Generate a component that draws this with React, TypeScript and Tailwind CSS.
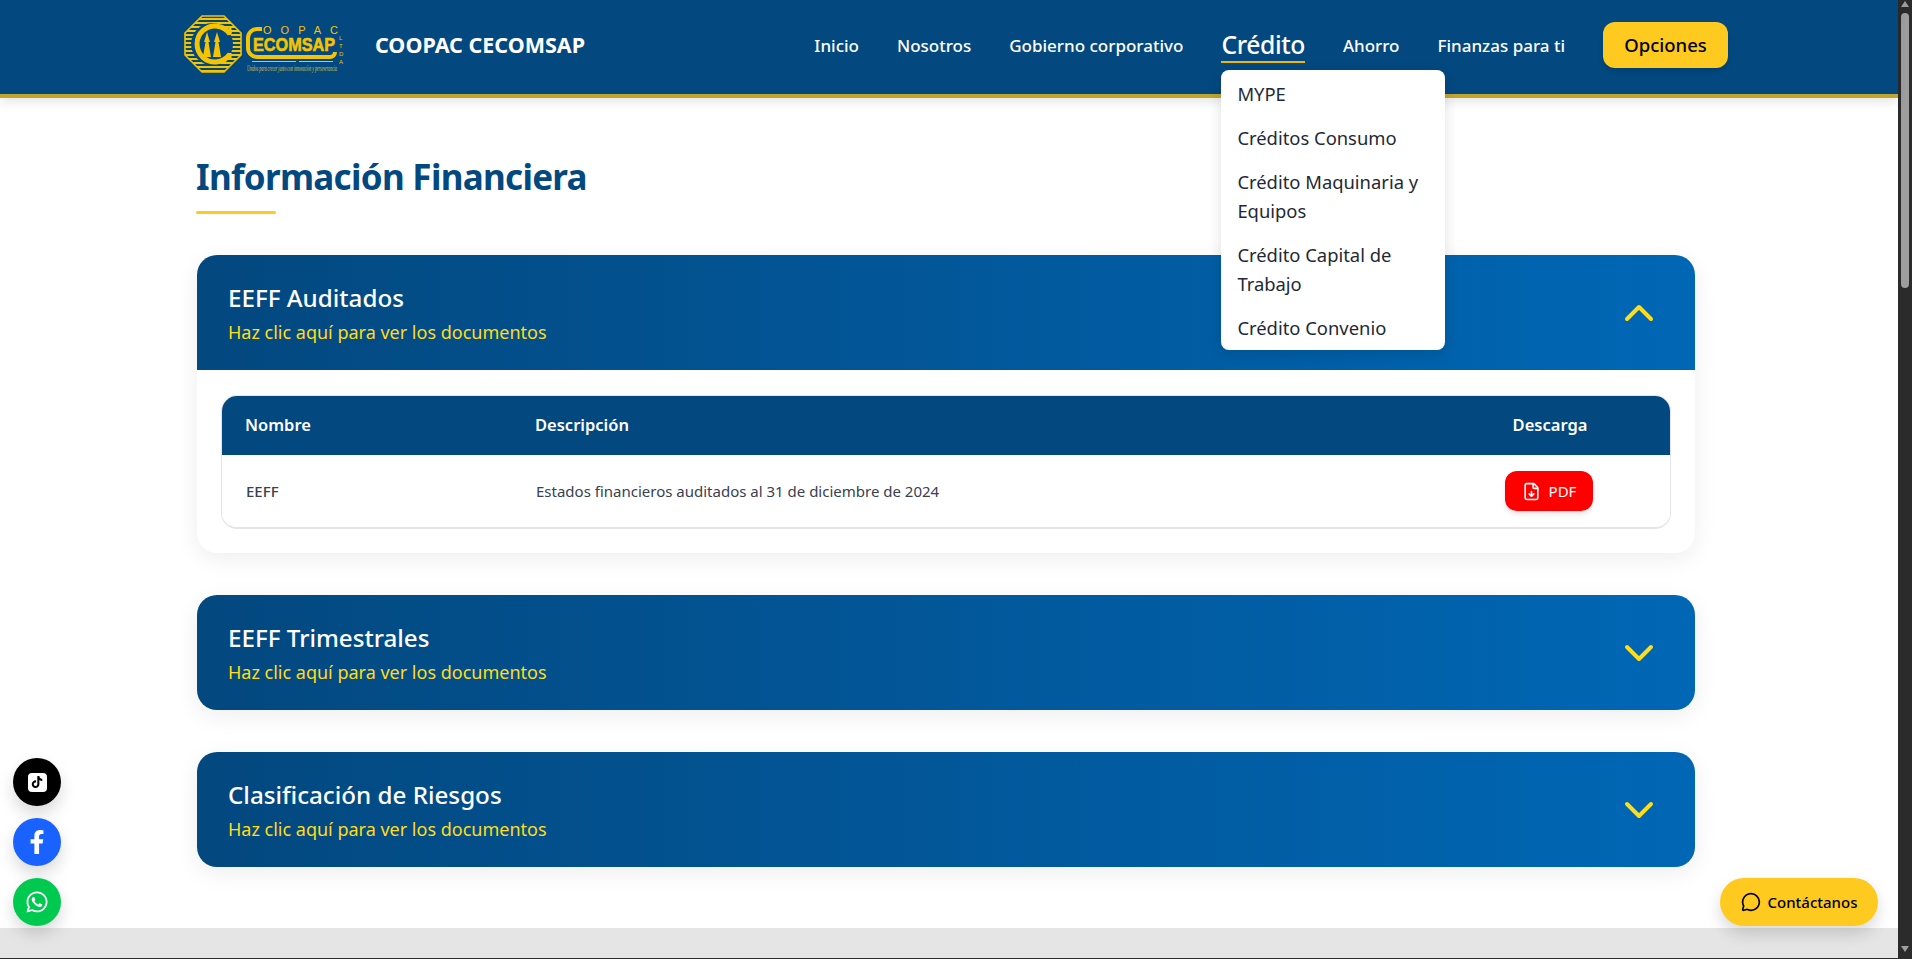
import { ChevronDown, ChevronUp, FileDown, MessageCircle } from "lucide-react";
import { FaFacebookF, FaTiktok, FaWhatsapp } from "react-icons/fa";

const font = "[font-family:'Noto_Sans','Open_Sans',sans-serif]";

function Logo() {
  const stripes = [];
  for (let y = 3; y < 57; y += 4) stripes.push(y);
  return (
    <svg width="162" height="60" viewBox="0 0 162 60" className="shrink-0 overflow-visible">
      <defs>
        <clipPath id="oct">
          <polygon points="18,1 40,1 57,18 57,40 40,57 18,57 1,40 1,18" />
        </clipPath>
      </defs>
      <g clipPath="url(#oct)">
        {stripes.map((y) => (
          <rect key={y} x="0" y={y} width="58" height="2" fill="#f5c400" />
        ))}
      </g>
      <polygon points="18,1 40,1 57,18 57,40 40,57 18,57 1,40 1,18" fill="none" stroke="#f5c400" strokeWidth="1.6" />
      <circle cx="28" cy="29" r="21" fill="#03487f" />
      <path d="M46 19 A18 18 0 1 0 46 39" fill="none" stroke="#f5c400" strokeWidth="5" />
      <path d="M46 13 V20 M46 38 V45" stroke="#f5c400" strokeWidth="3" />
      <path d="M23 17 L26 27 L24.5 27 L27 42 L19 42 L21.5 27 L20 27 Z" fill="#f5c400" />
      <path d="M33 17 L36 27 L34.5 27 L37 42 L29 42 L31.5 27 L30 27 Z" fill="#f5c400" />
      <text x="79" y="19" fontSize="11" fill="#f5c400" fontFamily="Liberation Sans" textLength="75" lengthAdjust="spacing">OOPAC</text>
      <path d="M78 14 H73 A9 9 0 0 0 64 23 V33 A9 9 0 0 0 73 42 H146 A5 5 0 0 0 151 37" fill="none" stroke="#f5c400" strokeWidth="4" />
      <text x="69" y="36" fontSize="19" fontWeight="700" fill="#f5c400" stroke="#f5c400" strokeWidth="0.6" fontFamily="Liberation Sans" textLength="82" lengthAdjust="spacingAndGlyphs">ECOMSAP</text>
      <rect x="68" y="46" width="44" height="1" fill="#f5c400" />
      <rect x="115" y="46" width="34" height="1" fill="#f5c400" />
      <text x="63" y="56" fontSize="8" fontStyle="italic" fill="#d9c24a" fontFamily="Liberation Serif" textLength="90" lengthAdjust="spacingAndGlyphs">Unidos para crecer junto con innovación y perseverancia</text>
      <text x="155" y="25" fontSize="6" fill="#f5c400" fontFamily="Liberation Sans">L</text>
      <text x="155" y="33" fontSize="6" fill="#f5c400" fontFamily="Liberation Sans">T</text>
      <text x="155" y="41" fontSize="6" fill="#f5c400" fontFamily="Liberation Sans">D</text>
      <text x="155" y="49" fontSize="6" fill="#f5c400" fontFamily="Liberation Sans">A</text>
    </svg>
  );
}

function NavLink({ children }: { children: string }) {
  return <a className="mt-[2px] text-[17px] font-medium text-white leading-6 whitespace-nowrap">{children}</a>;
}

function Header() {
  return (
    <header className="relative z-20 h-[98px] shrink-0 bg-[#03487f] border-b-[4px] border-[#bfa52c] shadow-[0_4px_10px_rgba(0,0,0,0.1)] flex items-center pl-[184px] pr-[170px]">
      <div className="mt-[-4px] flex items-center w-full">
        <Logo />
        <span className="ml-[29px] text-[21.5px] font-bold text-white whitespace-nowrap">COOPAC CECOMSAP</span>
        <nav className="ml-auto flex items-center gap-[38px]">
          <NavLink>Inicio</NavLink>
          <NavLink>Nosotros</NavLink>
          <NavLink>Gobierno corporativo</NavLink>
          <div className="relative">
            <a className="block pt-[1px] text-[24.7px] font-medium text-white leading-[33px] tracking-[-0.4px] border-b-[2px] border-[#f2b705] whitespace-nowrap">Crédito</a>
            <div className="absolute left-0 top-[43px] w-[224px] h-[280px] overflow-hidden bg-white rounded-lg shadow-[0_4px_14px_rgba(0,0,0,0.12)] text-[18.4px] leading-[29px] text-[#1f2937]">
              <div className="px-4 pt-[9px] pb-[7.5px]">MYPE</div>
              <div className="px-4 py-[7.5px]">Créditos Consumo</div>
              <div className="px-4 py-[7.5px]">Crédito Maquinaria y Equipos</div>
              <div className="px-4 py-[7.5px]">Crédito Capital de Trabajo</div>
              <div className="px-4 py-[7.5px]">Crédito Convenio</div>
            </div>
          </div>
          <NavLink>Ahorro</NavLink>
          <NavLink>Finanzas para ti</NavLink>
          <button className="h-[46px] w-[125px] rounded-xl bg-[#ffca1f] text-black text-[18.5px] font-medium shadow-md">Opciones</button>
        </nav>
      </div>
    </header>
  );
}

function AccordionHead({ title, open }: { title: string; open?: boolean }) {
  return (
    <div className={`h-[115px] flex items-center justify-between pl-[31px] pr-8 bg-gradient-to-r from-[#03487f] to-[#0067b5] ${open ? "rounded-t-[20px]" : "rounded-[20px]"}`}>
      <div className="mt-[2px]">
        <div className="text-[24.2px] font-medium leading-8 text-white">{title}</div>
        <div className="mt-[4px] text-[18px] leading-7 text-[#ffdd1a]">Haz clic aquí para ver los documentos</div>
      </div>
      {open ? <ChevronUp size={48} color="#ffdd1a" /> : <ChevronDown size={48} color="#ffdd1a" />}
    </div>
  );
}

function Table() {
  return (
    <div className="rounded-2xl border border-[#e3e5ea] border-b-2 overflow-hidden">
      <div className="grid grid-cols-[290px_1fr_242px] h-[60px] items-center bg-[#03487f] text-white text-[16.5px] font-semibold -mx-px -mt-px">
        <div className="pl-6">Nombre</div>
        <div className="pl-6">Descripción</div>
        <div className="text-center">Descarga</div>
      </div>
      <div className="grid grid-cols-[290px_1fr_242px] h-[72px] items-center bg-white text-[15px] text-[#374151]">
        <div className="pl-6 font-medium">EEFF</div>
        <div className="pl-6">Estados financieros auditados al 31 de diciembre de 2024</div>
        <div className="flex justify-center">
          <button className="h-10 w-[88px] rounded-xl bg-[#ff0000] text-white text-[15px] flex items-center justify-center gap-2 shadow-md">
            <FileDown size={19} />
            PDF
          </button>
        </div>
      </div>
    </div>
  );
}

function Circle({ className, children }: { className: string; children: React.ReactNode }) {
  return <div className={`size-12 rounded-full flex items-center justify-center text-white shadow-[0_8px_16px_rgba(0,0,0,0.15)] ${className}`}>{children}</div>;
}

export default function App() {
  return (
    <div className={`relative flex h-[959px] w-[1912px] overflow-hidden bg-[#2b2b2b] ${font}`}>
      <div className="flex flex-col w-[1898px] h-[958px] bg-white">
        <Header />
        <main className="flex-1 pl-[197px] pt-[58px]">
          <div className="w-[1498px]">
            <h1 className="pt-[1px] pb-[1px] text-[35px] leading-[40px] font-bold text-[#03487f] tracking-[-0.7px] -ml-[1px]">Información Financiera</h1>
            <div className="mt-[13px] -ml-[1px] h-[3px] w-20 rounded-full bg-[#ffca1f]" />
            <div className="mt-[41px] flex flex-col gap-[42px]">
              <section className="rounded-[20px] bg-white shadow-[0_6px_24px_rgba(0,0,0,0.07)]">
                <AccordionHead title="EEFF Auditados" open />
                <div className="px-6 pt-[25px] pb-6">
                  <Table />
                </div>
              </section>
              <section className="rounded-[20px] shadow-[0_6px_24px_rgba(0,0,0,0.07)]">
                <AccordionHead title="EEFF Trimestrales" />
              </section>
              <section className="rounded-[20px] shadow-[0_6px_24px_rgba(0,0,0,0.07)]">
                <AccordionHead title="Clasificación de Riesgos" />
              </section>
            </div>
          </div>
        </main>
        <footer className="h-[30px] shrink-0 bg-[#e5e5e5]" />
      </div>

      <div className="relative w-[14px] h-full">
        <div className="absolute left-[3px] top-[1px] w-0 h-0 border-x-[4px] border-x-transparent border-b-[6px] border-b-[#9e9e9e]" />
        <div className="absolute left-[3px] top-[13px] h-[275px] w-[8px] rounded-full bg-[#9e9e9e]" />
        <div className="absolute left-[3px] bottom-[7px] w-0 h-0 border-x-[4px] border-x-transparent border-t-[6px] border-t-[#9e9e9e]" />
      </div>

      <div className="absolute left-[13px] top-[758px] flex flex-col gap-3">
        <Circle className="bg-black">
          <span className="size-[19px] rounded-[4px] bg-white flex items-center justify-center">
            <FaTiktok size={12} color="#000" />
          </span>
        </Circle>
        <Circle className="bg-[#1a62ff]">
          <FaFacebookF size={24} />
        </Circle>
        <Circle className="bg-[#00c950]">
          <FaWhatsapp size={24} />
        </Circle>
      </div>

      <button className="absolute left-[1720px] top-[878px] h-12 w-[158px] rounded-full bg-[#ffca1f] text-black text-[15px] font-medium flex items-center justify-center gap-[7px] shadow-[0_8px_16px_rgba(0,0,0,0.15)]">
        <MessageCircle size={20} />
        Contáctanos
      </button>
    </div>
  );
}
